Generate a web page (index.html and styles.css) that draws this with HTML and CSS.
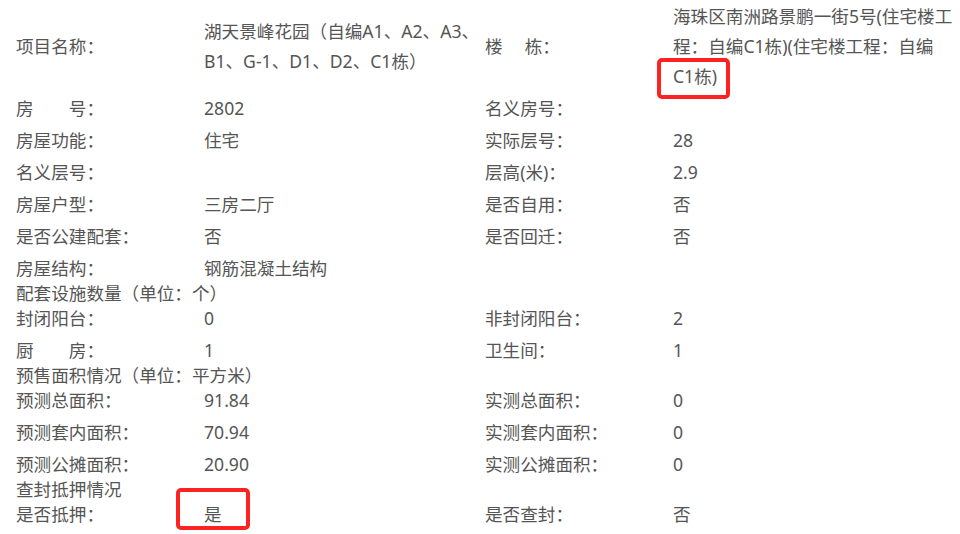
FILE: index.html
```html
<!DOCTYPE html>
<html lang="zh-CN">
<head>
<meta charset="utf-8">
<title>房屋信息</title>
<link rel="stylesheet" href="styles.css">
</head>
<body>
<div class="sheet">
  <div class="grid">
    <div class="label">项目名称：</div>
    <div class="value">湖天景峰花园（自编A1、A2、A3、B1、G-1、D1、D2、C1栋）</div>
    <div class="label">楼　&nbsp;栋：</div>
    <div class="value">海珠区南洲路景鹏一街5号(住宅楼工<br>程：自编C1栋)(住宅楼工程：自编<br>C1栋)</div>

    <div class="label">房　　号：</div>
    <div class="value">2802</div>
    <div class="label">名义房号：</div>
    <div class="value"></div>

    <div class="label">房屋功能：</div>
    <div class="value">住宅</div>
    <div class="label">实际层号：</div>
    <div class="value">28</div>

    <div class="label">名义层号：</div>
    <div class="value"></div>
    <div class="label">层高(米)：</div>
    <div class="value">2.9</div>

    <div class="label">房屋户型：</div>
    <div class="value">三房二厅</div>
    <div class="label">是否自用：</div>
    <div class="value">否</div>

    <div class="label">是否公建配套：</div>
    <div class="value">否</div>
    <div class="label">是否回迁：</div>
    <div class="value">否</div>

    <div class="label">房屋结构：</div>
    <div class="value">钢筋混凝土结构</div>
    <div class="label"></div>
    <div class="value"></div>

    <div class="section">配套设施数量（单位：个）</div>

    <div class="label">封闭阳台：</div>
    <div class="value">0</div>
    <div class="label">非封闭阳台：</div>
    <div class="value">2</div>

    <div class="label">厨　　房：</div>
    <div class="value">1</div>
    <div class="label">卫生间：</div>
    <div class="value">1</div>

    <div class="section">预售面积情况（单位：平方米）</div>

    <div class="label">预测总面积：</div>
    <div class="value">91.84</div>
    <div class="label">实测总面积：</div>
    <div class="value">0</div>

    <div class="label">预测套内面积：</div>
    <div class="value">70.94</div>
    <div class="label">实测套内面积：</div>
    <div class="value">0</div>

    <div class="label">预测公摊面积：</div>
    <div class="value">20.90</div>
    <div class="label">实测公摊面积：</div>
    <div class="value">0</div>

    <div class="section">查封抵押情况</div>

    <div class="label">是否抵押：</div>
    <div class="value">是</div>
    <div class="label">是否查封：</div>
    <div class="value">否</div>
  </div>
  <span class="mark mark-building"></span>
  <span class="mark mark-mortgage"></span>
</div>
</body>
</html>
```
FILE: styles.css
```css
html, body {
  margin: 0;
  padding: 0;
  background: #ffffff;
}

.sheet {
  position: relative;
  width: 960px;
  height: 534px;
  overflow: hidden;
  font-family: "Noto Sans", "Noto Sans CJK SC", sans-serif;
  font-size: 17.6px;
  color: #555555;
}

.grid {
  display: grid;
  grid-template-columns: 188px 281px 188px 1fr;
  padding-left: 16px;
  align-items: center;
}

.label,
.value {
  line-height: 30px;
  padding: 1px 0;
  white-space: normal;
}

.label {
  white-space: nowrap;
}

.section {
  grid-column: 1 / -1;
  line-height: 18px;
  white-space: nowrap;
}

.mark {
  position: absolute;
  box-sizing: border-box;
  border: 4px solid #ff2222;
  border-radius: 5px;
}

.mark-building {
  left: 657px;
  top: 58px;
  width: 73px;
  height: 41px;
}

.mark-mortgage {
  left: 176px;
  top: 488px;
  width: 74px;
  height: 42px;
}
```
